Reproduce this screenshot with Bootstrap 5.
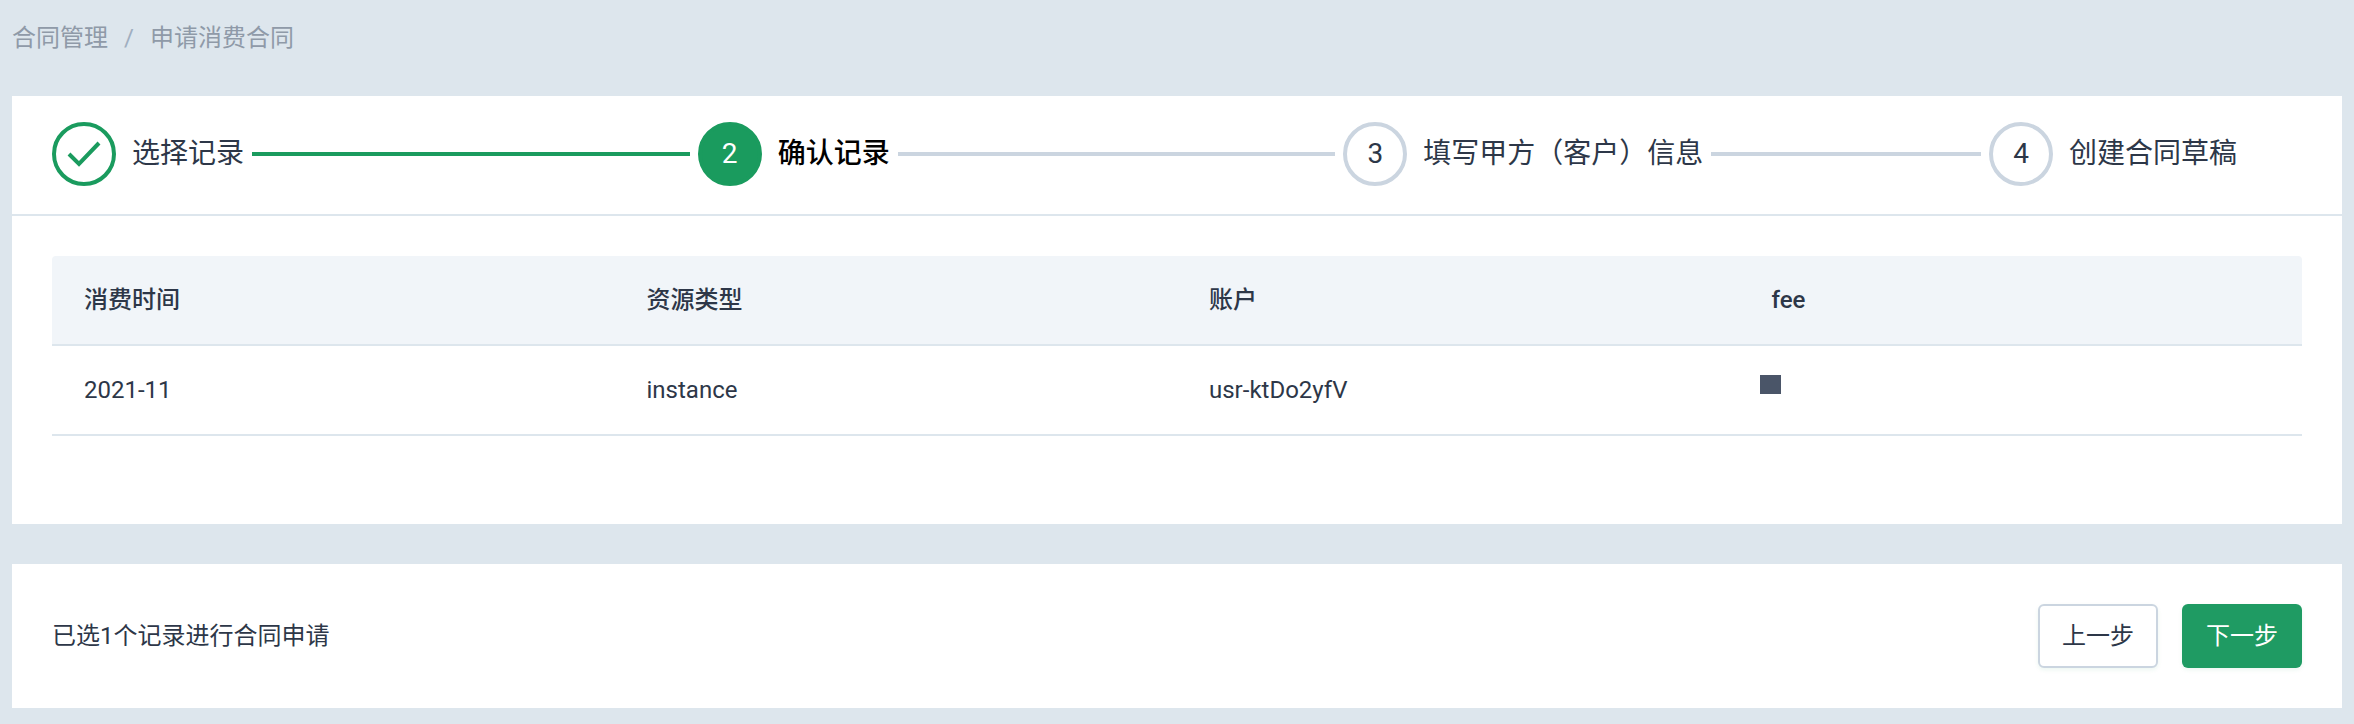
<!DOCTYPE html>
<html lang="zh-CN">
  <head>
    <meta charset="UTF-8" />
    <meta name="viewport" content="width=device-width, initial-scale=1.0" />
    <title>申请消费合同</title>
    <link
      rel="stylesheet"
      href="https://cdn.jsdelivr.net/npm/bootstrap@5.3.3/dist/css/bootstrap.min.css"
    />
    <style>
      body {
        background: #dde6ed;
        color: #2d3748;
        font-family: Roboto, "Noto Sans CJK SC", sans-serif;
        font-size: 24px;
        padding: 0 12px;
        height: 724px;
        overflow: hidden;
      }
      .crumbs {
        height: 96px;
        padding-top: 20px;
        margin: 0;
        line-height: 36px;
        --bs-breadcrumb-divider-color: #a0aec0;
        --bs-breadcrumb-item-active-color: #8f9aa8;
        --bs-breadcrumb-item-padding-x: 16px;
        --bs-breadcrumb-margin-bottom: 0;
      }
      .crumbs a {
        color: #8f9aa8;
        text-decoration: none;
      }
      .panel-main {
        height: 428px;
        margin-bottom: 40px;
      }
      .step-bar {
        height: 120px;
        padding: 26px 40px 0;
        border-bottom: 2px solid #dde6ed;
      }
      .step-item {
        flex: 1 1 0;
        min-width: 0;
      }
      .step-last {
        flex: 0 0 313px;
      }
      .step-dot {
        width: 64px;
        height: 64px;
        border: 4px solid #cbd5e0;
        border-radius: 50%;
        font-size: 28px;
        flex: none;
      }
      .step-done {
        border-color: #1a9b5e;
      }
      .step-now {
        background: #1a9b5e;
        border-color: #1a9b5e;
        color: #fff;
      }
      .step-text {
        font-size: 28px;
        line-height: 40px;
        margin-left: 16px;
        white-space: nowrap;
      }
      .step-text-now {
        color: #000;
        font-weight: 500;
      }
      .step-line {
        flex: 1 1 0;
        height: 4px;
        margin: 0 8px;
        background: #cbd5e0;
      }
      .step-line-done {
        background: #1a9b5e;
      }
      .table-wrap {
        padding: 40px 40px 0;
      }
      .fee-table {
        table-layout: fixed;
        margin: 0;
        font-size: 24px;
        --bs-table-color: #2d3748;
        --bs-table-border-color: #dde6ed;
      }
      .fee-table th {
        background: #f1f5f9;
        height: 89px;
        padding: 0 32px;
        font-weight: 500;
        vertical-align: middle;
        border-bottom: 2px solid #dde6ed;
      }
      .fee-table th:first-child {
        border-top-left-radius: 4px;
      }
      .fee-table th:last-child {
        border-top-right-radius: 4px;
      }
      .fee-table td {
        height: 90px;
        padding: 0 32px;
        vertical-align: middle;
        border-bottom: 2px solid #dde6ed;
      }
      .fee-mask {
        display: block;
        width: 21px;
        height: 19px;
        margin: -12px 0 0 -12px;
        background: #4a5568;
      }
      .panel-foot {
        height: 144px;
        padding: 0 40px;
      }
      .btn-step {
        width: 120px;
        height: 64px;
        font-size: 24px;
        border-radius: 6px;
        box-shadow: 0 2px 4px rgba(27, 158, 95, 0.08);
      }
      .btn-prev {
        background: #fff;
        border: 2px solid #cbd5e0;
        color: #2d3748;
      }
      .btn-next {
        background: #1f9b63;
        border: 0;
        color: #fff;
      }
    </style>
    <script src="https://cdn.jsdelivr.net/npm/bootstrap@5.3.3/dist/js/bootstrap.bundle.min.js"></script>
  </head>

  <body>
    <nav aria-label="breadcrumb">
      <ol class="breadcrumb crumbs">
        <li class="breadcrumb-item"><a href="#">合同管理</a></li>
        <li class="breadcrumb-item active" aria-current="page">申请消费合同</li>
      </ol>
    </nav>

    <section class="bg-white panel-main">
      <div class="d-flex step-bar">
        <div class="d-flex align-items-center step-item align-self-start">
          <span class="d-flex align-items-center justify-content-center step-dot step-done">
            <svg width="34" height="26" viewBox="0 0 34 26" fill="none" stroke="#1a9b5e" stroke-width="4">
              <path d="M2 13 L12 23 L32 2" />
            </svg>
          </span>
          <span class="step-text">选择记录</span>
          <span class="step-line step-line-done"></span>
        </div>
        <div class="d-flex align-items-center step-item align-self-start">
          <span class="d-flex align-items-center justify-content-center step-dot step-now">2</span>
          <span class="step-text step-text-now">确认记录</span>
          <span class="step-line"></span>
        </div>
        <div class="d-flex align-items-center step-item align-self-start">
          <span class="d-flex align-items-center justify-content-center step-dot">3</span>
          <span class="step-text">填写甲方（客户）信息</span>
          <span class="step-line"></span>
        </div>
        <div class="d-flex align-items-center step-last align-self-start">
          <span class="d-flex align-items-center justify-content-center step-dot">4</span>
          <span class="step-text">创建合同草稿</span>
        </div>
      </div>

      <div class="table-wrap">
        <table class="table fee-table">
          <thead>
            <tr>
              <th>消费时间</th>
              <th>资源类型</th>
              <th>账户</th>
              <th>fee</th>
            </tr>
          </thead>
          <tbody>
            <tr>
              <td>2021-11</td>
              <td>instance</td>
              <td>usr-ktDo2yfV</td>
              <td><span class="fee-mask"></span></td>
            </tr>
          </tbody>
        </table>
      </div>
    </section>

    <section class="bg-white d-flex align-items-center justify-content-between panel-foot">
      <span>已选1个记录进行合同申请</span>
      <div class="d-flex gap-4">
        <button type="button" class="btn btn-step btn-prev">上一步</button>
        <button type="button" class="btn btn-step btn-next">下一步</button>
      </div>
    </section>
  </body>
</html>
